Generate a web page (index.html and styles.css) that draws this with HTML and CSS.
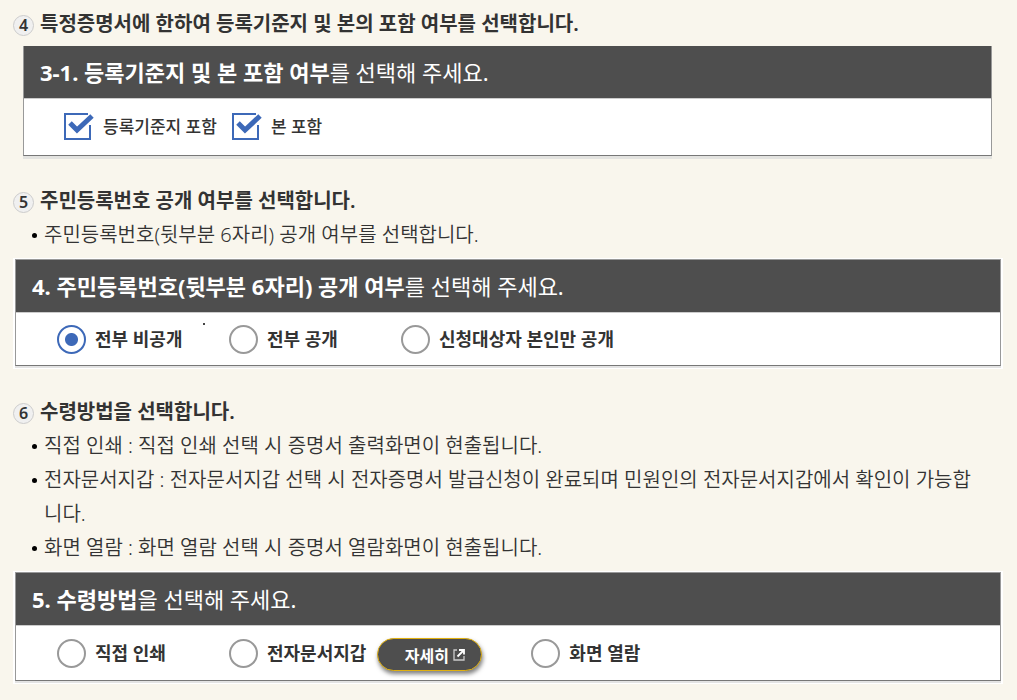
FILE: index.html
```html
<!DOCTYPE html>
<html lang="ko">
<head>
	<meta charset="utf-8">
	<meta name="viewport" content="width=device-width, initial-scale=1">
	<title>증명서 발급 안내</title>
	<link rel="stylesheet" href="styles.css">
</head>
<body>
	<main class="guide">
		<section class="step">
			<h2 class="step-title"><span class="num">4</span>특정증명서에 한하여 등록기준지 및 본의 포함 여부를 선택합니다.</h2>
			<div class="panel panel-inset" role="group" aria-labelledby="q3">
				<h3 class="panel-title" id="q3"><b>3-1. 등록기준지 및 본 포함 여부</b>를 선택해 주세요.</h3>
				<div class="checks">
					<label class="check">
						<input type="checkbox" checked>
						<svg width="31" height="28" viewBox="0 0 31 28" aria-hidden="true">
							<path class="box" d="M24 1H1V26H26V12"/>
							<path class="tick" d="M6 10L13 17L28 3"/>
						</svg>
						<span>등록기준지 포함</span>
					</label>
					<label class="check">
						<input type="checkbox" checked>
						<svg width="31" height="28" viewBox="0 0 31 28" aria-hidden="true">
							<path class="box" d="M24 1H1V26H26V12"/>
							<path class="tick" d="M6 10L13 17L28 3"/>
						</svg>
						<span>본 포함</span>
					</label>
				</div>
			</div>
		</section>

		<section class="step">
			<h2 class="step-title"><span class="num">5</span>주민등록번호 공개 여부를 선택합니다.</h2>
			<ul class="notes">
				<li>주민등록번호(뒷부분 6자리) 공개 여부를 선택합니다.</li>
			</ul>
			<div class="frame">
				<div class="panel" role="group" aria-labelledby="q4">
					<h3 class="panel-title" id="q4"><b>4. 주민등록번호(뒷부분 6자리) 공개 여부</b>를 선택해 주세요.</h3>
					<div class="radios">
						<label class="radio"><input type="radio" name="open" checked>전부 비공개</label>
						<label class="radio"><input type="radio" name="open">전부 공개</label>
						<label class="radio"><input type="radio" name="open">신청대상자 본인만 공개</label>
						<span class="speck"></span>
					</div>
				</div>
			</div>
		</section>

		<section class="step">
			<h2 class="step-title"><span class="num">6</span>수령방법을 선택합니다.</h2>
			<ul class="notes">
				<li>직접 인쇄 : 직접 인쇄 선택 시 증명서 출력화면이 현출됩니다.</li>
				<li>전자문서지갑 : 전자문서지갑 선택 시 전자증명서 발급신청이 완료되며 민원인의 전자문서지갑에서 확인이 가능합니다.</li>
				<li>화면 열람 : 화면 열람 선택 시 증명서 열람화면이 현출됩니다.</li>
			</ul>
			<div class="frame">
				<div class="panel" role="group" aria-labelledby="q5">
					<h3 class="panel-title" id="q5"><b>5. 수령방법</b>을 선택해 주세요.</h3>
					<div class="radios">
						<label class="radio"><input type="radio" name="receive">직접 인쇄</label>
						<label class="radio radio-tight"><input type="radio" name="receive">전자문서지갑</label>
						<button type="button" class="more">자세히
							<svg width="12" height="12" viewBox="0 0 12 12" aria-hidden="true">
								<path d="M4 1H1V11H11V7" stroke="#ccc" stroke-width="1.3"/>
								<path d="M4.5 7.5L10 2M6 1H11V5.5" stroke="#fff" stroke-width="1.8"/>
							</svg>
						</button>
						<label class="radio"><input type="radio" name="receive">화면 열람</label>
					</div>
				</div>
			</div>
		</section>
	</main>
</body>
</html>
```
FILE: styles.css
```css
* {
	box-sizing: border-box;
}
body {
	margin: 0;
	background-color: #f9f6ed;
	color: #333;
	font-family: "Noto Sans", "Noto Sans CJK KR", sans-serif;
	font-size: 20px;
	line-height: 34px;
}
h2, h3, ul {
	margin: 0;
	padding: 0;
}
.guide {
	padding: 7px 14px 0 13px;
}
.step {
	margin-bottom: 26px;
}
.step-title {
	display: flex;
	align-items: center;
	gap: 6px;
	font-size: 20px;
	font-weight: 600;
}
.num {
	display: flex;
	align-items: center;
	justify-content: center;
	width: 21px;
	height: 21px;
	margin-top: 2px;
	border: 1px solid #ccc;
	border-radius: 50%;
	background-color: #f0f0f0;
	font-size: 16px;
	line-height: 20px;
}
.notes {
	list-style: none;
	padding: 0 24px 0 19px;
	font-weight: 350;
}
.notes li {
	display: flex;
	gap: 7px;
}
.notes li::before {
	content: "";
	flex: none;
	width: 5px;
	height: 5px;
	margin-top: 15px;
	border-radius: 50%;
	background-color: #000;
}

/* question boxes */
.frame {
	margin-top: 6px;
	padding: 1px 2px 3px;
	background-color: #fff;
}
.panel {
	border: 1px solid #999;
	border-bottom-color: #777;
	background-color: #fff;
	box-shadow: 0 2px 0 #e3e3e3;
}
.panel-inset {
	margin: 5px 11px 28px 10px;
	border-top: none;
	box-shadow: 0 3px 0 #e3e3e0;
}
.panel-title {
	padding: 9px 16px;
	border-bottom: 1px solid #ccc;
	background-color: #4e4e4e;
	color: #fff;
	font-size: 22px;
	font-weight: 400;
}
.panel-title b {
	font-weight: 700;
}
.checks {
	display: flex;
	gap: 15px;
	padding: 11px 40px;
	font-size: 17px;
	font-weight: 500;
}
.check {
	display: grid;
	grid-template-columns: 31px auto;
	align-items: center;
	column-gap: 8px;
}
.check input {
	appearance: none;
	grid-area: 1 / 1;
	width: 28px;
	height: 28px;
	margin: 0;
}
.check svg {
	grid-area: 1 / 1;
	pointer-events: none;
}
.check path {
	fill: none;
	stroke: #3d69b8;
}
.check .box {
	stroke-width: 2;
}
.check .tick {
	stroke-width: 5;
}
.check input:not(:checked) + svg .tick {
	display: none;
}
.radios {
	position: relative;
	display: flex;
	align-items: center;
	padding: 9px 41px;
	font-size: 18px;
	font-weight: 600;
}
.radio {
	display: flex;
	align-items: center;
	gap: 9px;
	min-width: 172px;
}
.radio-tight {
	min-width: 0;
}
.radio input {
	appearance: none;
	flex: none;
	width: 29px;
	height: 29px;
	margin: 0;
	border: 2px solid #999;
	border-radius: 50%;
	background-color: #fff;
}
.radio input:checked {
	border-color: #3d69b8;
	background-image: radial-gradient(circle, #3d69b8 6px, transparent 7px);
}
.speck {
	position: absolute;
	top: 10px;
	left: 187px;
	width: 2px;
	height: 2px;
	background-color: #444;
}
.more {
	display: flex;
	align-items: center;
	justify-content: center;
	gap: 4px;
	width: 105px;
	height: 33px;
	margin: 3px 49px 0 11px;
	padding: 0 0 0 10px;
	border: 1px solid #e0b010;
	border-radius: 17px;
	background-color: #4e4e4e;
	box-shadow: 1px 3px 4px rgba(0, 0, 0, 0.5);
	color: #fff;
	font-family: inherit;
	font-size: 16px;
	font-weight: 600;
}
.more path {
	fill: none;
}
```
